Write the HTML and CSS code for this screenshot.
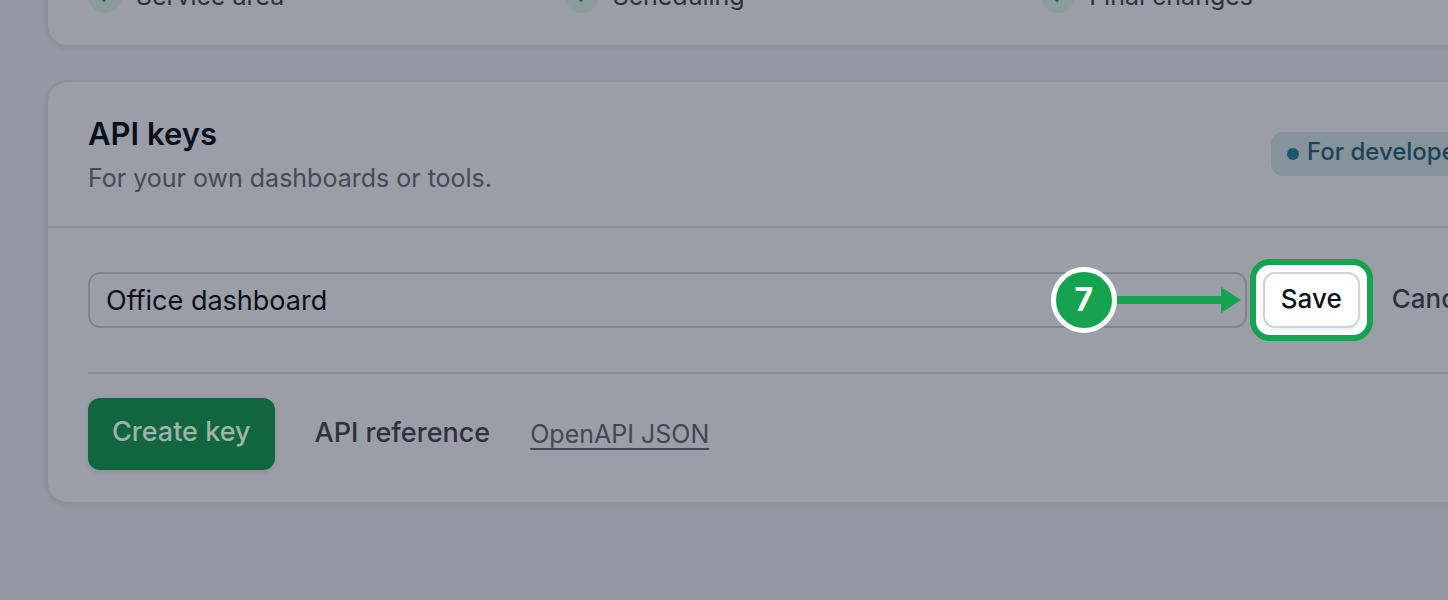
FILE: index.html
```html
<!DOCTYPE html>
<html lang="en">
<head>
<meta charset="utf-8">
<title>API keys</title>
<link rel="stylesheet" href="styles.css">
</head>
<body>
<main class="page">
  <section class="card card-events">
    <ul class="events">
      <li class="event"><span class="check"><svg viewBox="0 0 34 34" aria-hidden="true"><path d="M11 16l5 5 8-10"/></svg></span>Service area</li>
      <li class="event"><span class="check"><svg viewBox="0 0 34 34" aria-hidden="true"><path d="M11 16l5 5 8-10"/></svg></span>Scheduling</li>
      <li class="event"><span class="check"><svg viewBox="0 0 34 34" aria-hidden="true"><path d="M11 16l5 5 8-10"/></svg></span>Final changes</li>
    </ul>
  </section>

  <section class="card">
    <header class="card-head">
      <div>
        <h2 class="title">API keys</h2>
        <p class="subtitle">For your own dashboards or tools.</p>
      </div>
      <span class="badge">For developers</span>
    </header>
    <div class="card-body">
      <form class="key-form">
        <input class="key-name" type="text" value="Office dashboard" aria-label="Key name">
        <div class="spotlight">
          <button class="save" type="button">Save</button>
          <div class="callout">
            <span class="step">7</span>
            <svg class="arrow" viewBox="0 0 124 26" aria-hidden="true"><path d="M0 9h104V0l20 13-20 13v-9H0z"/></svg>
          </div>
        </div>
        <button class="cancel" type="button">Cancel</button>
      </form>
      <div class="actions">
        <button class="create" type="button">Create key</button>
        <a class="reference" href="#reference">API reference</a>
        <a class="openapi" href="#openapi">OpenAPI JSON</a>
      </div>
    </div>
  </section>
</main>
</body>
</html>
```
FILE: styles.css
```css
* { box-sizing: border-box; }

body {
  margin: 0;
  min-height: 100vh;
  overflow: hidden;
  background: #9496a1;
  color: #2b3240;
  font-family: Inter, "Liberation Sans", sans-serif;
  font-size: 25px;
  line-height: 36px;
}

button, input {
  margin: 0;
  font: inherit;
}

.page {
  display: flex;
  flex-direction: column;
  gap: 33px;
  margin: -55px -88px 0 46px;
}

.card {
  border: 2px solid #8c9099;
  border-radius: 22px;
  background: #9b9ea6;
  box-shadow: 0 2px 4px rgba(40, 45, 60, 0.06);
}

.card-events { padding: 32px 40px; }

.events {
  display: grid;
  grid-template-columns: repeat(3, 1fr);
  gap: 24px;
  margin: 0;
  padding: 0;
  list-style: none;
}

.event {
  display: flex;
  align-items: center;
  gap: 14px;
  height: 34px;
}

.check {
  width: 34px;
  height: 34px;
  border-radius: 50%;
  background: #8b9d9b;
}

.check svg {
  display: block;
  fill: none;
  stroke: #146440;
  stroke-width: 3;
}

.card-head {
  display: flex;
  align-items: center;
  justify-content: space-between;
  padding: 30px 40px;
  border-bottom: 2px solid #8b9199;
}

.title {
  margin: 0 0 4px;
  color: #0b111b;
  font-size: 31px;
  line-height: 44px;
  font-weight: 600;
}

.subtitle {
  margin: 0;
  color: #444b58;
}

.badge {
  display: flex;
  align-items: center;
  gap: 8px;
  height: 44px;
  padding: 0 16px 4px;
  border-radius: 12px;
  background: #85949b;
  color: #1c4259;
  font-size: 24px;
  font-weight: 500;
}

.badge::before {
  content: "";
  width: 12px;
  height: 12px;
  margin-top: 4px;
  border-radius: 50%;
  background: #1d5870;
}

.card-body { padding: 44px 40px 32px; }

.key-form {
  display: flex;
  gap: 16px;
  padding-bottom: 44px;
  border-bottom: 2px solid #8b8f98;
}

.key-name {
  flex: 1;
  min-width: 0;
  height: 56px;
  padding: 0 16px;
  border: 2px solid #80848f;
  border-radius: 12px;
  background: transparent;
  color: #0b111b;
  font-size: 27px;
}

.spotlight { position: relative; }

.spotlight::before {
  content: "";
  position: absolute;
  inset: -13px;
  border: 6px solid #16a34f;
  border-radius: 20px;
  background: #fff;
}

.save {
  position: relative;
  height: 56px;
  padding: 0 16px 2px;
  border: 2px solid #cfd2da;
  border-radius: 12px;
  background: #fff;
  box-shadow: 0 2px 4px rgba(20, 30, 50, 0.08);
  color: #0b111b;
  font-size: 26px;
  font-weight: 500;
}

.callout {
  position: absolute;
  top: -5px;
  right: 100%;
  display: flex;
  align-items: center;
  margin-right: 22px;
}

.step {
  display: flex;
  flex: none;
  align-items: center;
  justify-content: center;
  width: 66px;
  height: 66px;
  border: 5px solid #fff;
  border-radius: 50%;
  background: #16a34f;
  color: #fff;
  font-size: 32px;
  font-weight: 700;
}

.arrow {
  flex: none;
  width: 124px;
  height: 26px;
  fill: #16a34f;
}

.cancel {
  padding: 0 16px 2px;
  border: 0;
  background: transparent;
  color: #2b3240;
  font-size: 26px;
  font-weight: 500;
}

.actions {
  display: flex;
  align-items: center;
  gap: 40px;
  padding-top: 24px;
}

.create {
  height: 72px;
  padding: 0 24px 4px;
  border: 0;
  border-radius: 12px;
  background: #116640;
  box-shadow: 0 2px 4px rgba(30, 40, 50, 0.12);
  color: #9eb3ab;
  font-size: 27px;
  font-weight: 500;
}

.reference {
  padding-bottom: 2px;
  color: #2b3240;
  font-size: 27px;
  font-weight: 500;
  text-decoration: none;
}

.openapi {
  color: #404755;
  text-underline-offset: 5px;
  text-decoration-thickness: 2px;
}
```
